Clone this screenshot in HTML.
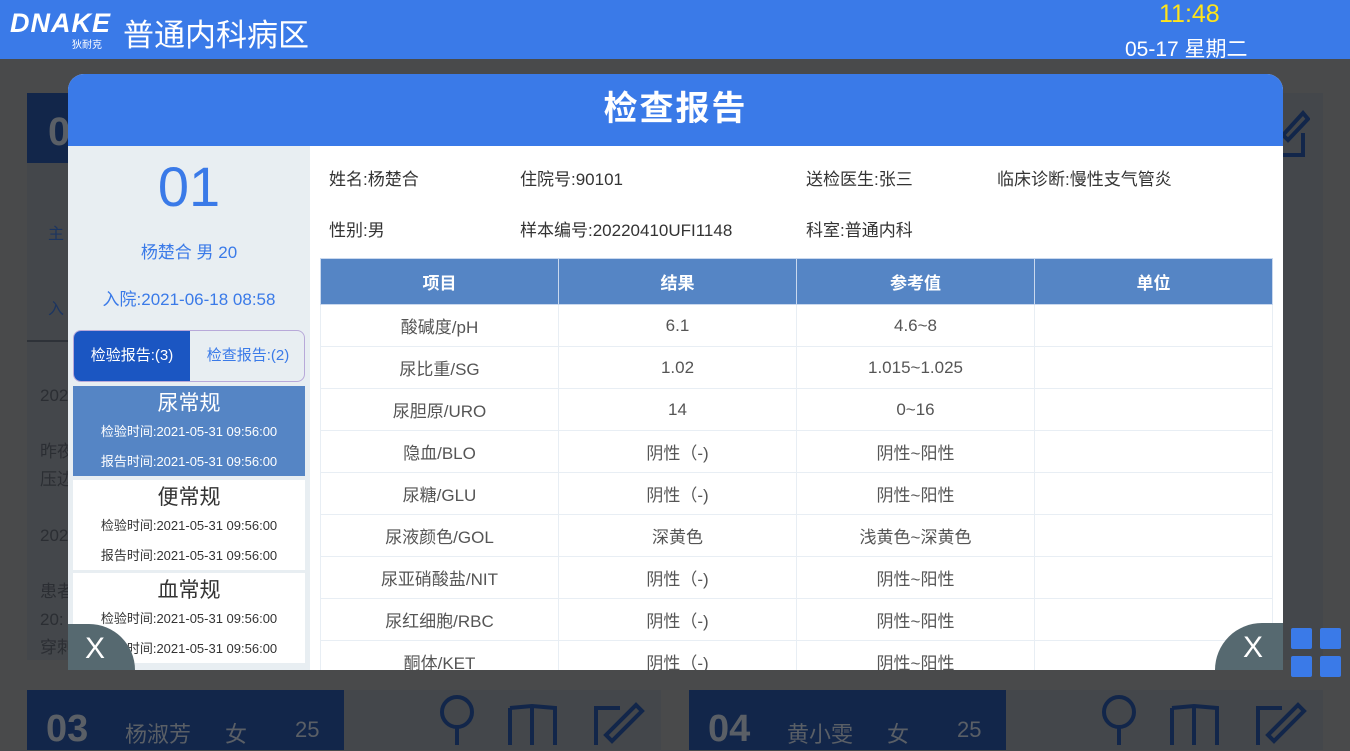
<!DOCTYPE html>
<html><head><meta charset="utf-8"><style>
*{margin:0;padding:0;box-sizing:border-box}
body{width:1350px;height:745px;overflow:hidden;background:#494a4b;font-family:"Liberation Sans","Noto Sans CJK SC",sans-serif;position:relative}
.abs{position:absolute}
.hdr{left:0;top:0;width:1350px;height:59px;background:#3a7ae8;color:#fff}
.card{background:#44474b}
.dk{background:#12264a}
.gt{color:#2b2e33}
.modal{left:68px;top:74px;width:1215px;height:596px;background:#fff;border-radius:16px 16px 0 0;overflow:hidden}
.title{left:0;top:0;width:1215px;height:72px;background:#3a7ae8;color:#fff;font-size:34px;font-weight:bold;text-align:center;line-height:70px;letter-spacing:2px}
.lp{left:0;top:72px;width:242px;height:524px;background:#e8eef2}
.item{position:absolute;left:5px;width:232px;height:90px;background:#fff;text-align:center;color:#333}
.item .n{font-size:21px;margin-top:1px;height:30px}
.item .t{font-size:13px;line-height:30px;height:30px}
table{position:absolute;left:252px;top:184px;width:953px;border-collapse:collapse;font-size:17px;color:#555}
td,th{border:1px solid #e8eef4;text-align:center;width:238px}
th{background:#5585c5;color:#fff;height:46px;font-weight:bold;font-size:17px;border-color:#c9d8ee}
td{height:42px}
.info{font-size:17px;color:#333}
</style></head><body>
<div class="abs hdr">
<div class="abs" style="left:10px;top:8px;font-size:27px;font-style:italic;font-weight:bold;letter-spacing:1px">DNAKE</div>
<div class="abs" style="left:72px;top:36px;font-size:10px">狄耐克</div>
<div class="abs" style="left:123px;top:10px;font-size:31px">普通内科病区</div>
<div class="abs" style="left:1159px;top:0px;font-size:25px;color:#ffe41a">11:48</div>
<div class="abs" style="left:1125px;top:33px;font-size:21px">05-17 星期二</div>
</div>
<!-- background cards -->
<div class="abs card" style="left:27px;top:93px;width:1296px;height:567px"></div>
<div class="abs dk" style="left:27px;top:93px;width:300px;height:70px"></div>
<div class="abs gt" style="left:48px;top:110px;font-size:40px;font-weight:bold;color:#5a5f66">0</div>
<div class="abs" style="left:27px;top:340px;width:300px;height:2px;background:#2e3238"></div>
<div class="abs" style="left:48px;top:220px;font-size:16px;color:#1c3560">主</div>
<div class="abs" style="left:48px;top:295px;font-size:16px;color:#1c3560">入</div>
<div class="abs gt" style="left:40px;top:382px;font-size:17px;line-height:28px">202<br><br>昨夜<br>压边<br><br>202<br><br>患者<br>20:<br>穿刺</div>
<div class="abs card" style="left:27px;top:690px;width:634px;height:60px"></div>
<div class="abs dk" style="left:27px;top:690px;width:317px;height:60px"></div>
<div class="abs" style="left:46px;top:708px;font-size:38px;font-weight:bold;color:#5a5f66">03</div>
<div class="abs" style="left:125px;top:717px;font-size:22px;color:#5a5f66">杨淑芳</div>
<div class="abs" style="left:225px;top:717px;font-size:22px;color:#5a5f66">女</div>
<div class="abs" style="left:295px;top:717px;font-size:22px;color:#5a5f66">25</div>
<div class="abs card" style="left:689px;top:690px;width:634px;height:60px"></div>
<div class="abs dk" style="left:689px;top:690px;width:317px;height:60px"></div>
<div class="abs" style="left:708px;top:708px;font-size:38px;font-weight:bold;color:#5a5f66">04</div>
<div class="abs" style="left:787px;top:717px;font-size:22px;color:#5a5f66">黄小雯</div>
<div class="abs" style="left:887px;top:717px;font-size:22px;color:#5a5f66">女</div>
<div class="abs" style="left:957px;top:717px;font-size:22px;color:#5a5f66">25</div>
<svg class="abs" style="left:0;top:690px" width="1350" height="55" fill="none" stroke="#12264a" stroke-width="4">
<g id="ic"><circle cx="457" cy="22" r="15"/><path d="M457 37V55M510 18V55M510 18L532 16L555 18V55M532 16V55M620 18H596V55M606 45L636 15L642 21L612 51Z"/></g>
<use href="#ic" x="662"/>
</svg>
<svg class="abs" style="left:1270px;top:105px" width="40" height="55" fill="none" stroke="#12264a" stroke-width="4"><path d="M13 30L33 8L38 14L18 35Z M33 28V50H13"/></svg>
<!-- modal -->
<div class="abs modal">
<div class="abs title">检查报告</div>
<div class="abs lp">
<div class="abs" style="left:0;top:8px;width:242px;text-align:center;font-size:56px;color:#3a7ae8">01</div>
<div class="abs" style="left:0;top:92px;width:242px;text-align:center;font-size:17px;color:#3a7ae8">杨楚合 男 20</div>
<div class="abs" style="left:0;top:139px;width:242px;text-align:center;font-size:17px;color:#3a7ae8">入院:2021-06-18 08:58</div>
<div class="abs" style="left:5px;top:184px;width:232px;height:52px;border:1px solid #b8a9d9;border-radius:8px;overflow:hidden;background:#e8eef2">
<div class="abs" style="left:0;top:0;width:116px;height:52px;background:#1b56c2;color:#fff;font-size:15px;line-height:50px;text-align:center">检验报告:(3)</div>
<div class="abs" style="left:116px;top:0;width:116px;height:52px;color:#3a7ae8;font-size:15px;line-height:50px;text-align:center">检查报告:(2)</div>
</div>
<div class="item" style="top:240px;background:#5585c5;color:#fff"><div class="n">尿常规</div><div class="t">检验时间:2021-05-31 09:56:00</div><div class="t">报告时间:2021-05-31 09:56:00</div></div>
<div class="item" style="top:334px"><div class="n">便常规</div><div class="t">检验时间:2021-05-31 09:56:00</div><div class="t">报告时间:2021-05-31 09:56:00</div></div>
<div class="item" style="top:427px"><div class="n">血常规</div><div class="t">检验时间:2021-05-31 09:56:00</div><div class="t">报告时间:2021-05-31 09:56:00</div></div>
</div>
<div class="abs info" style="left:261px;top:91px">姓名:杨楚合</div>
<div class="abs info" style="left:452px;top:91px">住院号:90101</div>
<div class="abs info" style="left:738px;top:91px">送检医生:张三</div>
<div class="abs info" style="left:929px;top:91px">临床诊断:慢性支气管炎</div>
<div class="abs info" style="left:261px;top:142px">性别:男</div>
<div class="abs info" style="left:452px;top:142px">样本编号:20220410UFI1148</div>
<div class="abs info" style="left:738px;top:142px">科室:普通内科</div>
<table>
<tr><th>项目</th><th>结果</th><th>参考值</th><th>单位</th></tr>
<tr><td>酸碱度/pH</td><td>6.1</td><td>4.6~8</td><td></td></tr>
<tr><td>尿比重/SG</td><td>1.02</td><td>1.015~1.025</td><td></td></tr>
<tr><td>尿胆原/URO</td><td>14</td><td>0~16</td><td></td></tr>
<tr><td>隐血/BLO</td><td>阴性（-)</td><td>阴性~阳性</td><td></td></tr>
<tr><td>尿糖/GLU</td><td>阴性（-)</td><td>阴性~阳性</td><td></td></tr>
<tr><td>尿液颜色/GOL</td><td>深黄色</td><td>浅黄色~深黄色</td><td></td></tr>
<tr><td>尿亚硝酸盐/NIT</td><td>阴性（-)</td><td>阴性~阳性</td><td></td></tr>
<tr><td>尿红细胞/RBC</td><td>阴性（-)</td><td>阴性~阳性</td><td></td></tr>
<tr><td>酮体/KET</td><td>阴性（-)</td><td>阴性~阳性</td><td></td></tr>
</table>
<div class="abs" style="left:0;top:550px;width:67px;height:46px;background:#566970;border-radius:0 46px 0 0;color:#fff;font-size:30px;padding:8px 0 0 17px">X</div>
<div class="abs" style="left:1147px;top:549px;width:68px;height:47px;background:#566970;border-radius:47px 0 0 0;color:#fff;font-size:30px;padding:8px 0 0 28px">X</div>
</div>
<div class="abs" style="left:1291px;top:628px;width:21px;height:21px;background:#3a7ae8;border-radius:2px"></div>
<div class="abs" style="left:1320px;top:628px;width:21px;height:21px;background:#3a7ae8;border-radius:2px"></div>
<div class="abs" style="left:1291px;top:656px;width:21px;height:21px;background:#3a7ae8;border-radius:2px"></div>
<div class="abs" style="left:1320px;top:656px;width:21px;height:21px;background:#3a7ae8;border-radius:2px"></div>
</body></html>
